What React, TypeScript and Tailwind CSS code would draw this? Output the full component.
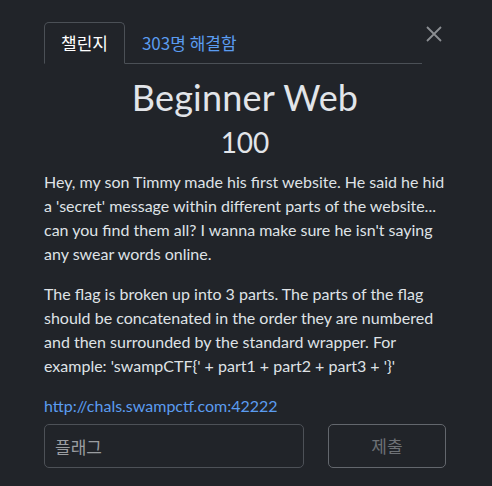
import React from 'react';

const App = () => {
    return (
        <div className="w-[492px] h-[486px] bg-[#212429] text-[#dfe2e6] font-['Lato','Noto_Sans_CJK_KR',sans-serif] pl-[44px] pr-[46px] pt-[22px]">
            {/* Tabs + close */}
            <div className="relative">
                <ul className="flex w-[378px] border-b border-[#4b5056] font-['Noto_Sans_CJK_KR',sans-serif]">
                    <li className="-mb-px">
                        <span className="block px-4 py-2 leading-6 text-[17px] text-white border border-[#4b5056] border-b-[#212429] rounded-t-[5px]">
                            챌린지
                        </span>
                    </li>
                    <li className="-mb-px">
                        <span className="block px-4 py-2 leading-6 text-[17px] text-[#5b9cf0] border border-transparent">
                            303명 해결함
                        </span>
                    </li>
                </ul>
                <button className="absolute right-[4px] top-[4px] w-[16px] h-[16px] text-[#8b8e92]">
                    <svg viewBox="0 0 16 16" className="w-4 h-4" fill="none" stroke="currentColor" strokeWidth="1.8">
                        <path d="M1 1 L15 15 M15 1 L1 15" />
                    </svg>
                </button>
            </div>

            {/* Title */}
            <h2 className="mt-3 mb-[6px] text-center text-[36px] leading-[43px] text-[#e2e5e9] tracking-[0.2px]">
                Beginner Web
            </h2>
            <h3 className="mb-[11px] text-center text-[28px] leading-[34px] text-[#e2e5e9]">
                100
            </h3>

            {/* Description */}
            <p className="text-[16px] leading-6 mb-4">
                Hey, my son Timmy made his first website. He said he hid a 'secret' message within different parts of the website... can you find them all? I wanna make sure he isn't saying any swear words online.
            </p>
            <p className="text-[16px] leading-6 mb-4">
                {"The flag is broken up into 3 parts. The parts of the flag should be concatenated in the order they are numbered and then surrounded by the standard wrapper. For example: 'swampCTF{' + part1 + part2 + part3 + '}'"}
            </p>
            <p className="text-[16px] leading-6 mb-[6px]">
                <a className="text-[#5b9cf0]">http://chals.swampctf.com:42222</a>
            </p>

            {/* Submit row */}
            <div className="flex gap-6 font-['Noto_Sans_CJK_KR',sans-serif]">
                <input
                    placeholder="플래그"
                    className="flex-1 min-w-0 h-[44px] rounded-[5px] border border-[#4d5157] bg-transparent px-[10px] text-[17px] placeholder:text-[#9a9da1] outline-none"
                />
                <button className="w-[118px] h-[44px] rounded-[5px] border border-[#63676d] text-[17px] text-[#6d7176]">
                    제출
                </button>
            </div>
        </div>
    );
};

export default App;
